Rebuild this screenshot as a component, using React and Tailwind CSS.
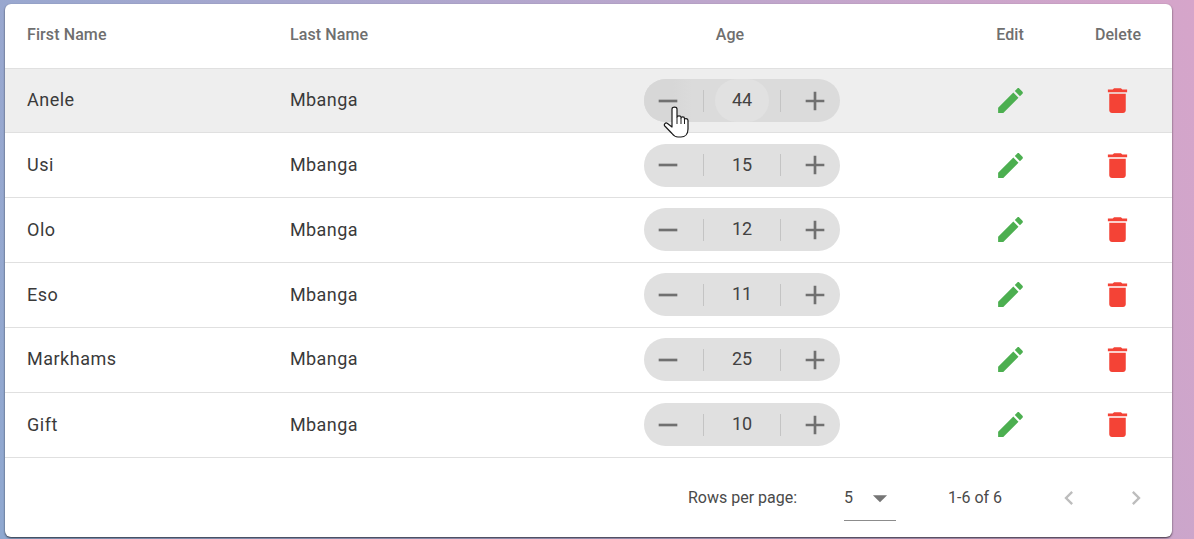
const rows = [
  ["Anele", 44],
  ["Usi", 15],
  ["Olo", 12],
  ["Eso", 11],
  ["Markhams", 25],
  ["Gift", 10],
];

const gridCols = "grid grid-cols-[263px_352px_272px_64px_108px_108px]";

function Stepper({ value, hover }) {
  return (
    <div className={`flex h-[43px] w-[196px] items-center rounded-full ${hover ? "bg-[#dbdbdb]" : "bg-[#e0e0e0]"}`}>
      <button className={`mr-[11px] flex h-[43px] w-[48px] items-center justify-center rounded-l-full ${hover ? "bg-[linear-gradient(90deg,#d7d7d7,#d7d7d7_60%,#dbdbdb)]" : ""}`}>
        <svg viewBox="0 0 24 24" className="h-[32px] w-[32px] fill-[#707070]"><path d="M19 13H5v-2h14v2z" /></svg>
      </button>
      <span className="h-[22px] w-px bg-[#c4c4c4]" />
      <span className={`mx-[11px] flex h-[43px] w-[54px] items-center justify-center rounded-full pb-[2px] text-[18px] text-[#424242] ${hover ? "bg-[#e1e1e1]" : ""}`}>
        {value}
      </span>
      <span className="h-[22px] w-px bg-[#c4c4c4]" />
      <button className="flex h-[43px] flex-1 items-center justify-center pl-[9px]">
        <svg viewBox="0 0 24 24" className="h-[32px] w-[32px] fill-[#707070]"><path d="M19 13h-6v6h-2v-6H5v-2h6V5h2v6h6v2z" /></svg>
      </button>
    </div>
  );
}

function Row({ name, age, hover, last }) {
  const pad = hover ? "pb-[3px]" : "pb-[1.5px]";
  const height = hover ? "h-[64px] bg-[#eeeeee]" : last ? "h-[65.5px]" : "h-[64.9px]";
  return (
    <div className={`${gridCols} ${height} items-center border-b border-[#e0e0e0] pt-[0.12px]`}>
      <div className={`${pad} pl-[22px] text-[18px] tracking-[0.5px] text-[#3a3a3a]`}>{name}</div>
      <div className={`${pad} pl-[22px] text-[18px] tracking-[0.4px] text-[#3a3a3a]`}>Mbanga</div>
      <div className="pl-[24px]"><Stepper value={age} hover={hover} /></div>
      <div />
      <div className="flex justify-center">
        <svg viewBox="0 0 24 24" className="h-[33px] w-[33px] fill-[#4caf50]">
          <path d="M3 17.25V21h3.75L17.81 9.94l-3.75-3.75L3 17.25zM20.71 7.04c.39-.39.39-1.02 0-1.41l-2.34-2.34c-.39-.39-1.02-.39-1.41 0l-1.83 1.83 3.75 3.75 1.83-1.83z" />
        </svg>
      </div>
      <div className="flex justify-center pr-[1px]">
        <svg viewBox="0 0 24 24" className="h-[33px] w-[33px] fill-[#f44336]">
          <path d="M6 19c0 1.1.9 2 2 2h8c1.1 0 2-.9 2-2V7H6v12zM19 4h-3.5l-1-1h-5l-1 1H5v2h14V4z" />
        </svg>
      </div>
    </div>
  );
}

export default function App() {
  return (
    <div
      className="relative h-[539px] w-[1194px] overflow-hidden bg-[linear-gradient(70deg,#8fa8d0,#d6a5ca)] pt-[4px] pl-[5px] text-[#3a3a3a]"
      style={{ fontFamily: "Roboto, sans-serif" }}
    >
      <div className="h-[533px] w-[1167px] rounded-[6px] bg-white shadow-[0_1px_2px_rgba(0,0,0,0.7)]">
        <div className={`${gridCols} h-[65px] items-center border-b border-[#e0e0e0] pb-[3px] text-[16px] font-medium tracking-[0.1px] text-[#6f6f6f]`}>
          <div className="pl-[22px]">First Name</div>
          <div className="pl-[22px]">Last Name</div>
          <div className="w-[220px] text-center">Age</div>
          <div />
          <div className="text-center">Edit</div>
          <div className="text-center">Delete</div>
        </div>
        {rows.map(([name, age], i) => (
          <Row key={name} name={name} age={age} hover={i === 0} last={i === rows.length - 1} />
        ))}
        <div className="flex h-[79px] items-center pt-[1.5px] pl-[683px] text-[16px] text-[#4a4a4a]">
          <span className="w-[156px]">Rows per page:</span>
          <div className="flex h-[45px] w-[52px] items-center justify-between border-b border-[#8c8c8c]">
            <span>5</span>
            <svg viewBox="0 0 24 24" className="-mr-[1px] h-[34px] w-[34px] fill-[#757575]"><path d="M7 10l5 5 5-5z" /></svg>
          </div>
          <span className="ml-[52px] w-[107px]">1-6 of 6</span>
          <svg viewBox="0 0 24 24" className="h-[28px] w-[28px] fill-[#bdbdbd]"><path d="M15.41 7.41 14 6l-6 6 6 6 1.41-1.41L10.83 12z" /></svg>
          <svg viewBox="0 0 24 24" className="ml-[39px] h-[28px] w-[28px] fill-[#bdbdbd]"><path d="M10 6 8.59 7.41 13.17 12l-4.58 4.59L10 18l6-6z" /></svg>
        </div>
      </div>
      <svg viewBox="0 0 28 34" className="absolute left-[663px] top-[105px] h-[34px] w-[28px]">
        <path
          d="M9 4C9 1.5 14 1.5 14 4V12C14 10.5 18 10.5 18 12V13C18 11.5 21.5 11.5 21.5 13.5V14.5C21.5 13 25 13.5 25 15.5V24C25 29 22 32 18 32H15C12 32 10.5 30.5 9 28.5L1.8 21C.5 19.5 2.5 17 4.5 18.5L9 22Z"
          fill="#fff"
          stroke="#1a1a1a"
          strokeWidth="1.2"
          strokeLinejoin="round"
        />
        <path d="M14 12V19M18 13V19M21.5 14.5V19" fill="none" stroke="#1a1a1a" strokeWidth="1" />
      </svg>
    </div>
  );
}
